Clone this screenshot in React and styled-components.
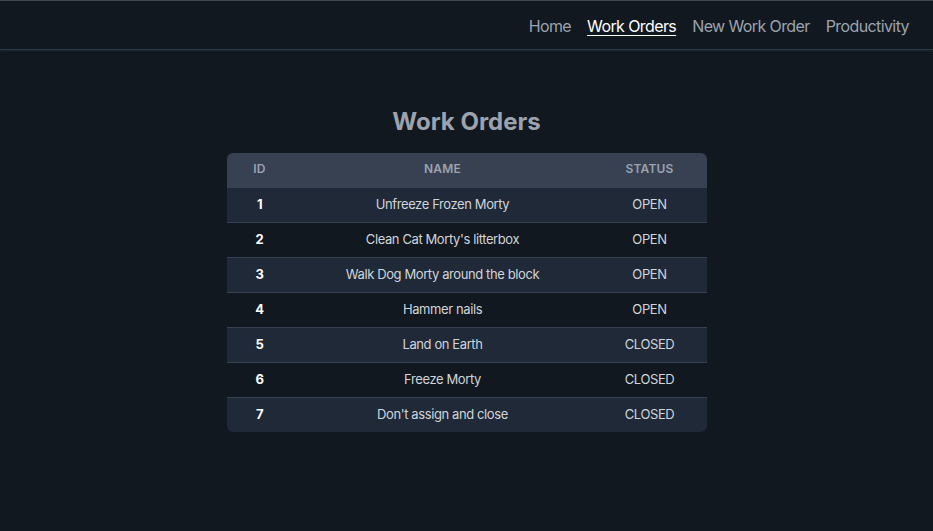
import styled, { createGlobalStyle } from 'styled-components'

const Global = createGlobalStyle`
  body {
    margin: 0;
    background-color: #11181f;
    font-family: Inter, "Noto Sans", sans-serif;
  }
`;

const Header = styled.header`
  height: 47px;
  border-top: 1px solid #45484c;
  border-bottom: 1px solid #2c3844;
  box-shadow: 0 1px 2px rgba(40, 52, 64, 0.6);
  display: flex;
  justify-content: flex-end;
  align-items: center;
  padding-right: 24px;
  padding-top: 1px;
  gap: 16px;
`;

const NavLink = styled.a`
  font-size: 16px;
  letter-spacing: -0.6px;
  color: ${p => (p.active ? '#ffffff' : '#9ca3af')};
  text-decoration: ${p => (p.active ? 'underline' : 'none')};
  text-underline-offset: 3px;
  cursor: pointer;
`;

const Main = styled.main`
  display: flex;
  flex-direction: column;
  align-items: center;
  padding-top: 56px;
`;

const Title = styled.h1`
  font-size: 24px;
  line-height: 32px;
  font-weight: 700;
  color: #9ca3af;
  margin: 0 0 15px;
`;

const Table = styled.table`
  width: 480px;
  border-collapse: separate;
  border-spacing: 0;
  border-radius: 6px;
  overflow: hidden;
  font-size: 13px;
  letter-spacing: -0.4px;
  text-align: center;
`;

const Th = styled.th`
  background-color: #374151;
  color: #9ca3af;
  font-size: 12px;
  font-weight: 600;
  text-transform: uppercase;
  letter-spacing: 0.2px;
  height: 34px;
  padding: 0 0 4px;
  box-sizing: border-box;
  width: ${p => p.w}px;
`;

const Row = styled.tr`
  background-color: ${p => (p.odd ? '#1f2937' : 'transparent')};
`;

const Td = styled.td`
  height: 35px;
  padding: 0 0 2px;
  box-sizing: border-box;
  border-top: 1px solid #374151;
  color: ${p => (p.bold ? '#ffffff' : '#d1d5db')};
  font-weight: ${p => (p.bold ? 700 : 400)};
`;

const orders = [
  [1, 'Unfreeze Frozen Morty', 'OPEN'],
  [2, "Clean Cat Morty's litterbox", 'OPEN'],
  [3, 'Walk Dog Morty around the block', 'OPEN'],
  [4, 'Hammer nails', 'OPEN'],
  [5, 'Land on Earth', 'CLOSED'],
  [6, 'Freeze Morty', 'CLOSED'],
  [7, "Don't assign and close", 'CLOSED'],
];

export default function App() {
  return (
    <div>
      <Global />
      <Header>
        <NavLink>Home</NavLink>
        <NavLink active>Work Orders</NavLink>
        <NavLink>New Work Order</NavLink>
        <NavLink>Productivity</NavLink>
      </Header>
      <Main>
        <Title>Work Orders</Title>
        <Table>
          <thead>
            <tr>
              <Th w={66}>ID</Th>
              <Th w={300}>Name</Th>
              <Th w={114}>Status</Th>
            </tr>
          </thead>
          <tbody>
            {orders.map(([id, name, status], i) => (
              <Row key={id} odd={i % 2 === 0}>
                <Td bold>{id}</Td>
                <Td>{name}</Td>
                <Td>{status}</Td>
              </Row>
            ))}
          </tbody>
        </Table>
      </Main>
    </div>
  )
}
